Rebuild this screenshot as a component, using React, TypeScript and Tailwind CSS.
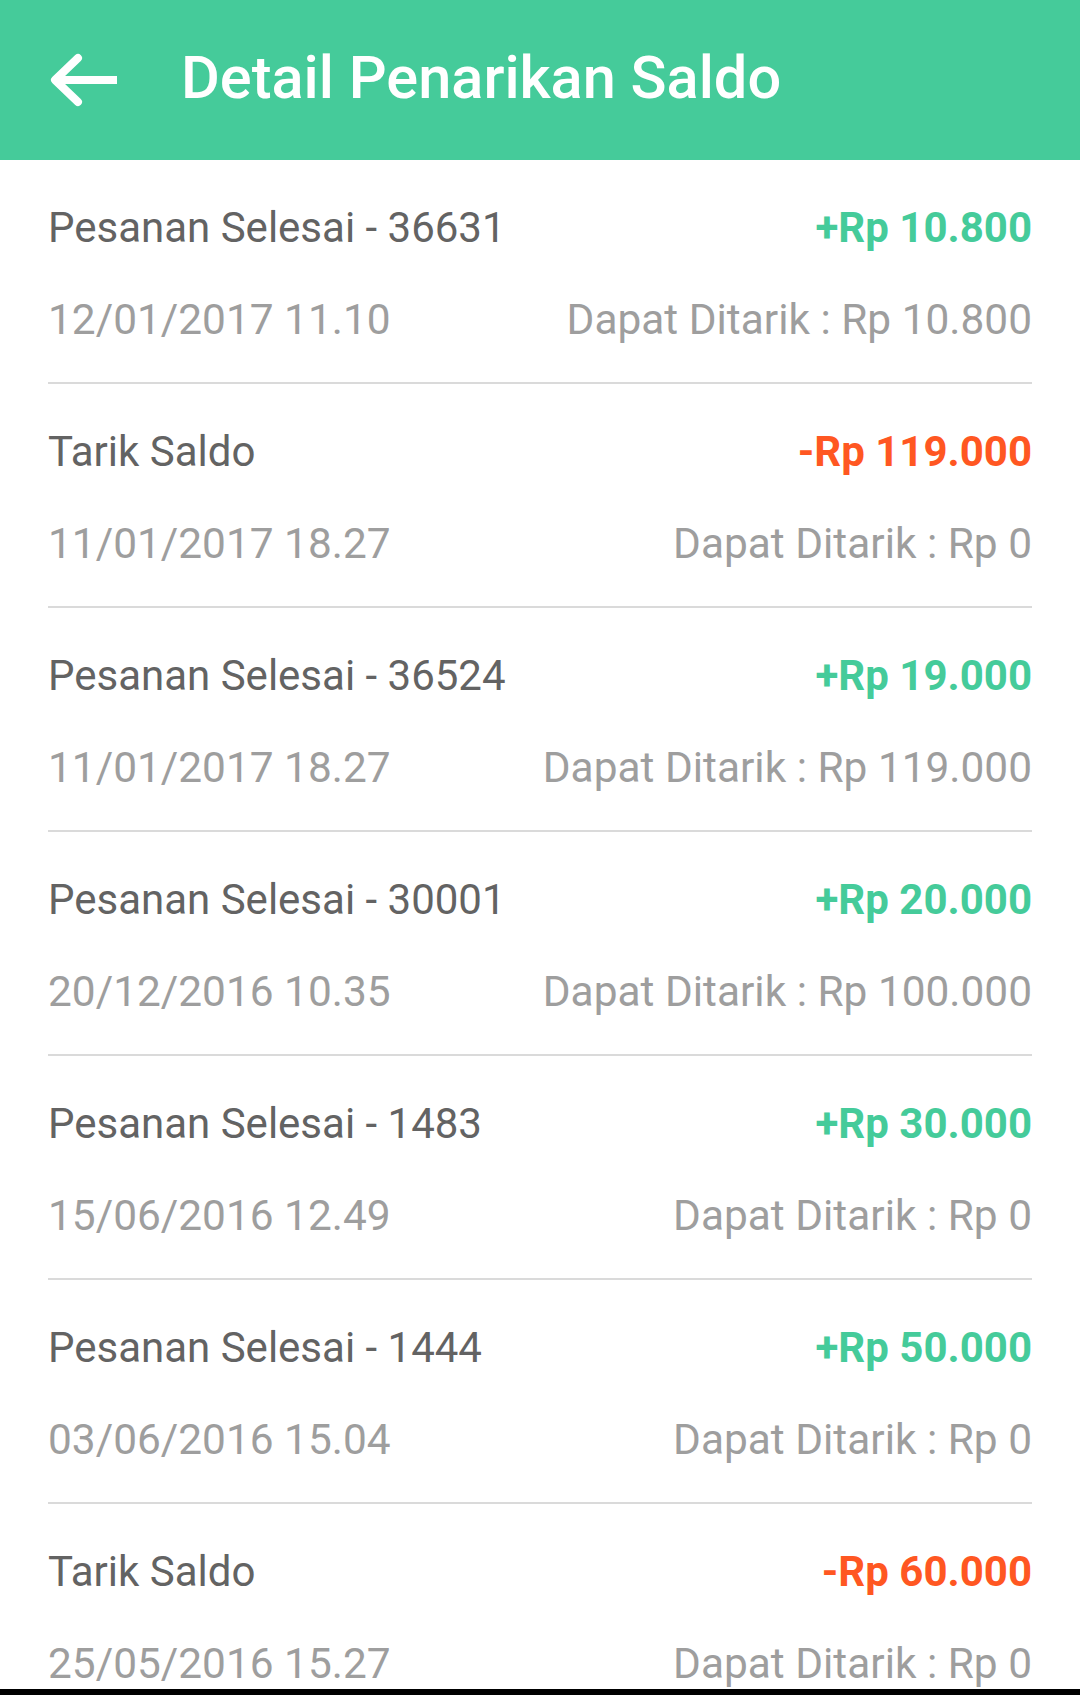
import React from 'react';

type Entry = {
  title: string;
  date: string;
  amount: string;
  credit: boolean;
  available: string;
};

const entries: Entry[] = [
  { title: 'Pesanan Selesai - 36631', date: '12/01/2017 11.10', amount: '+Rp 10.800', credit: true, available: 'Rp 10.800' },
  { title: 'Tarik Saldo', date: '11/01/2017 18.27', amount: '-Rp 119.000', credit: false, available: 'Rp 0' },
  { title: 'Pesanan Selesai - 36524', date: '11/01/2017 18.27', amount: '+Rp 19.000', credit: true, available: 'Rp 119.000' },
  { title: 'Pesanan Selesai - 30001', date: '20/12/2016 10.35', amount: '+Rp 20.000', credit: true, available: 'Rp 100.000' },
  { title: 'Pesanan Selesai - 1483', date: '15/06/2016 12.49', amount: '+Rp 30.000', credit: true, available: 'Rp 0' },
  { title: 'Pesanan Selesai - 1444', date: '03/06/2016 15.04', amount: '+Rp 50.000', credit: true, available: 'Rp 0' },
  { title: 'Tarik Saldo', date: '25/05/2016 15.27', amount: '-Rp 60.000', credit: false, available: 'Rp 0' },
];

function BackArrow() {
  return (
    <svg width="75" height="60" viewBox="0 0 75 60" fill="none" stroke="white" strokeWidth="8">
      <path d="M10 30H72" strokeLinecap="butt" />
      <path d="M33 8L10 30L33 52" strokeLinecap="round" strokeLinejoin="round" />
    </svg>
  );
}

function Row({ item }: { item: Entry }) {
  return (
    <div className="mx-[48px] border-b-2 border-[#dadada] pt-[40px] pb-[34px]">
      <div className="flex items-center justify-between text-[42px] leading-[56px]">
        <span className="text-[#636363]">{item.title}</span>
        <span className={item.credit ? 'font-bold text-[#45cb9a]' : 'font-bold text-[#ff5722]'}>{item.amount}</span>
      </div>
      <div className="mt-[36px] flex items-center justify-between text-[42.4px] leading-[56px] text-[#9e9e9e]">
        <span>{item.date}</span>
        <span>Dapat Ditarik : {item.available}</span>
      </div>
    </div>
  );
}

export default function App() {
  return (
    <div className="flex h-[1695px] w-[1080px] flex-col overflow-hidden bg-white font-['Roboto',sans-serif]">
      {/* Toolbar */}
      <header className="flex h-[160px] shrink-0 items-center bg-[#45cb9a] pl-[45px]">
        <BackArrow />
        <h1 className="ml-[61px] pb-[2px] text-[59.5px] font-medium text-white">Detail Penarikan Saldo</h1>
      </header>

      {/* List */}
      <main className="flex-1 overflow-hidden">
        {entries.map((item, i) => (
          <Row key={i} item={item} />
        ))}
      </main>

      <div className="h-[6px] shrink-0 bg-black" />
    </div>
  );
}
